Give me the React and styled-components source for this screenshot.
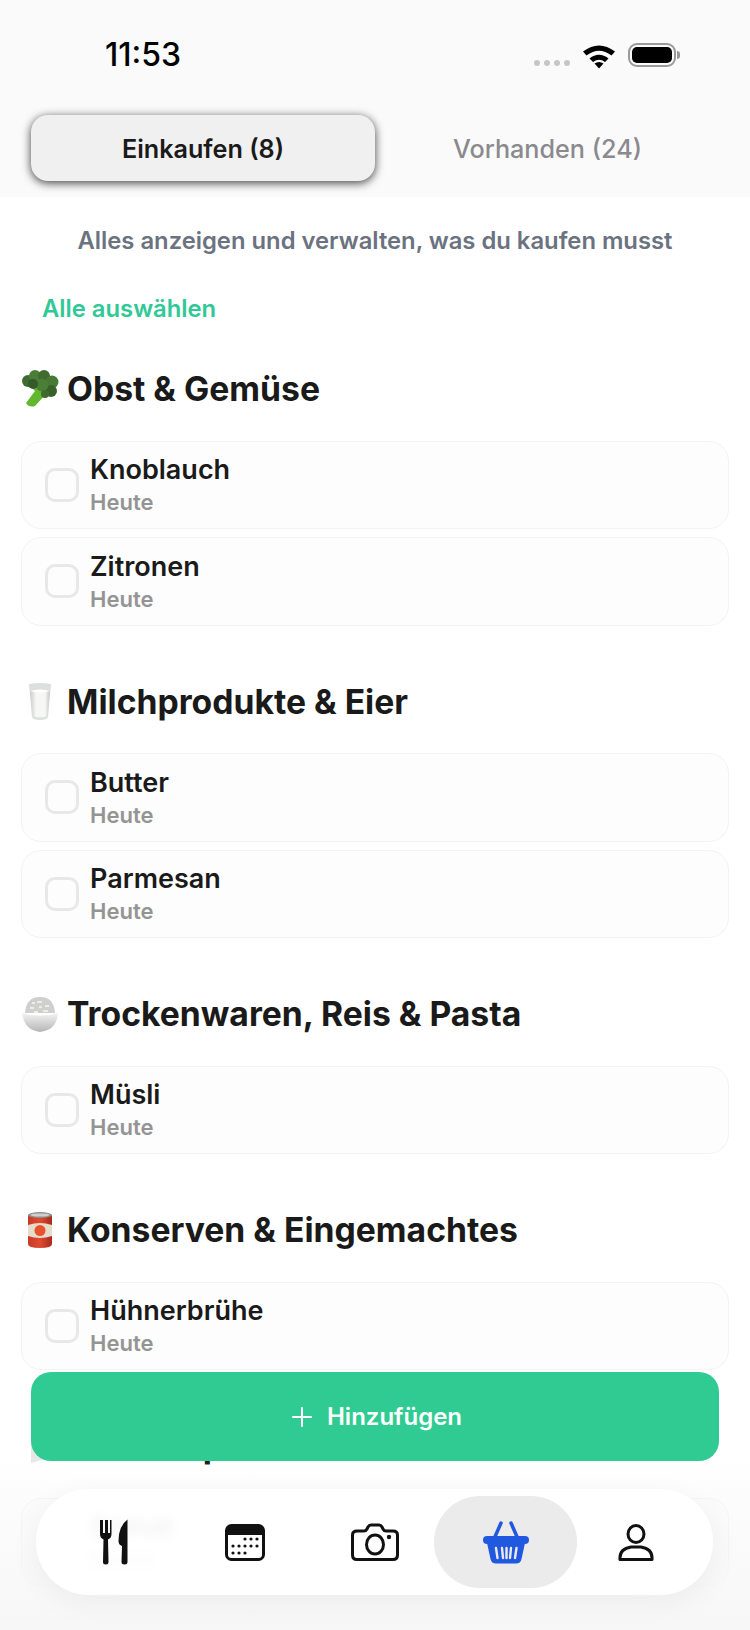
import React from "react";
import styled, { createGlobalStyle } from "styled-components";

const GlobalStyle = createGlobalStyle`
  html, body {
    margin: 0;
    padding: 0;
    background: #fff;
    font-family: Inter, "Liberation Sans", sans-serif;
  }
`;

const sections = [
  { title: "Obst & Gemüse", icon: "broccoli", items: ["Knoblauch", "Zitronen"] },
  { title: "Milchprodukte & Eier", icon: "milk", items: ["Butter", "Parmesan"] },
  { title: "Trockenwaren, Reis & Pasta", icon: "rice", items: ["Müsli"] },
  { title: "Konserven & Eingemachtes", icon: "can", items: ["Hühnerbrühe"] },
  { title: "Tiefkühlprodukte", icon: "ice", items: ["Spinat"] },
];

function Broccoli() {
  return (
    <svg width="38" height="38" viewBox="0 0 38 38">
      <path d="M5 33 L14 21 L11 18 L15 16 L21 21 L26 23 L14 36 Q8 38 5 33 Z" fill="#62b82c" />
      <circle cx="7" cy="11" r="6" fill="#3f6b30" />
      <circle cx="14" cy="6" r="6" fill="#4a7d38" />
      <circle cx="23" cy="6" r="6" fill="#3f6b30" />
      <circle cx="31" cy="12" r="6.500" fill="#477a35" />
      <circle cx="30" cy="21" r="6" fill="#386029" />
      <circle cx="21" cy="15" r="6.500" fill="#4b7f38" />
      <circle cx="12" cy="14" r="5" fill="#34592a" />
      <circle cx="24" cy="24" r="4" fill="#3f6b30" />
    </svg>
  );
}

function Milk() {
  return (
    <svg width="38" height="38" viewBox="0 0 38 38">
      <defs>
        <linearGradient id="milkBody" x1="0" x2="1" y1="0" y2="0">
          <stop offset="0" stopColor="#c9ccca" />
          <stop offset="0.3" stopColor="#f7f7f4" />
          <stop offset="0.75" stopColor="#f7f7f4" />
          <stop offset="1" stopColor="#c4c7c5" />
        </linearGradient>
      </defs>
      <path d="M8 1 Q19 -1 30 1 L27 34 Q26 37 19 37 Q12 37 11 34 Z" fill="#dcdfde" />
      <path d="M9 8 Q19 5 29 8 L26.500 33 Q19 36 11.500 33 Z" fill="url(#milkBody)" />
      <path d="M9 8 Q19 11 29 8 Q19 5 9 8 Z" fill="#ffffff" />
    </svg>
  );
}

function Rice() {
  return (
    <svg width="38" height="38" viewBox="0 0 38 38">
      <defs>
        <linearGradient id="riceBowl" x1="0" x2="0" y1="0" y2="1">
          <stop offset="0" stopColor="#f4f4f4" />
          <stop offset="1" stopColor="#b5b5b5" />
        </linearGradient>
      </defs>
      <path d="M4 18 Q5 2 19 2 Q33 2 34 18 Z" fill="#cfcfcd" />
      <path d="M9 13 h4 M16 7 h5 M24 11 h4 M13 17 h4 M22 16 h5 M18 12 h3 M11 8 h3" stroke="#ececea" strokeWidth="1.800" />
      <path d="M1 18 Q19 23 37 18 Q36 35 19 37 Q3 35 1 18 Z" fill="url(#riceBowl)" />
    </svg>
  );
}

function Can() {
  return (
    <svg width="38" height="38" viewBox="0 0 38 38">
      <defs>
        <linearGradient id="canBody" x1="0" x2="1" y1="0" y2="0">
          <stop offset="0" stopColor="#c73a26" />
          <stop offset="0.5" stopColor="#e04a30" />
          <stop offset="1" stopColor="#a52c1c" />
        </linearGradient>
      </defs>
      <path d="M7 4 H31 V33 Q31 37 19 37 Q7 37 7 33 Z" fill="url(#canBody)" />
      <ellipse cx="19" cy="4" rx="12" ry="3" fill="#8f8f8f" />
      <ellipse cx="19" cy="4" rx="9.500" ry="1.600" fill="#d0d0d0" />
      <path d="M7 14 Q19 10 31 14 V25 Q19 29 7 25 Z" fill="#e6dccb" />
      <circle cx="19" cy="19.500" r="5.500" fill="#e8532d" />
    </svg>
  );
}

function Ice() {
  return (
    <svg width="38" height="38" viewBox="0 0 38 38">
      <path d="M10 4 L32 4 L32 30 L10 36 Z" fill="#e6e8e8" />
    </svg>
  );
}

const emojis = { broccoli: Broccoli, milk: Milk, rice: Rice, can: Can, ice: Ice };

export default function App() {
  return (
    <>
      <GlobalStyle />
      <Page>
        <Header>
          <StatusBar>
            <Clock>11:53</Clock>
            <StatusIcons>
              <Dots>
                <i /><i /><i /><i />
              </Dots>
              <svg width="34" height="26" viewBox="0 0 34 26">
                <path d="M1 8.500 Q17 -3.500 33 8.500 L29.500 12.500 Q17 3 4.500 12.500 Z" fill="#000" />
                <path d="M7.500 15.500 Q17 8 26.500 15.500 L23 19 Q17 14.500 11 19 Z" fill="#000" />
                <path d="M12.500 20.500 Q17 17.500 21.500 20.500 L17 25.500 Z" fill="#000" />
              </svg>
              <Battery><span /></Battery>
            </StatusIcons>
          </StatusBar>
          <Tabs>
            <Tab $active>Einkaufen (8)</Tab>
            <Tab>Vorhanden (24)</Tab>
          </Tabs>
        </Header>
        <Intro>Alles anzeigen und verwalten, was du kaufen musst</Intro>
        <SelectAll>Alle auswählen</SelectAll>
        {sections.map(section => {
          const Emoji = emojis[section.icon];
          return (
            <Section key={section.title}>
              <SectionTitle>
                <Emoji />
                {section.title}
              </SectionTitle>
              <List>
                {section.items.map(item => (
                  <Card key={item}>
                    <Check />
                    <div>
                      <ItemName>{item}</ItemName>
                      <ItemDate>Heute</ItemDate>
                    </div>
                  </Card>
                ))}
              </List>
            </Section>
          );
        })}
        <Footer>
          <AddButton>
            <svg width="20" height="20" viewBox="0 0 20 20">
              <path d="M10 1 V19 M1 10 H19" stroke="#fff" strokeWidth="2" strokeLinecap="round" />
            </svg>
            Hinzufügen
          </AddButton>
          <Nav>
            <NavItem>
              <svg width="32" height="46" viewBox="0 0 32 46">
                <path d="M2 1 V15 Q2 19 5.500 20.500 L5 43 Q5 45.500 7.750 45.500 Q10.500 45.500 10.500 43 L10 20.500 Q13.500 19 13.500 15 V1 H12 V14 H10 V1 H7 V14 H5 V1 Z" fill="#111" />
                <path d="M29.500 0.500 Q20.500 7 20.500 22 Q20.500 26 24 27 L23.500 43 Q23.500 45.500 26.500 45.500 Q29.500 45.500 29.500 43 Z" fill="#111" />
              </svg>
            </NavItem>
            <NavItem>
              <svg width="40" height="37" viewBox="0 0 40 37">
                <rect x="1.500" y="1.500" width="37" height="34" rx="5" fill="#fff" stroke="#111" strokeWidth="3" />
                <path d="M1.500 11 V6.500 Q1.500 1.500 6.500 1.500 H33.500 Q38.500 1.500 38.500 6.500 V11 Z" fill="#111" />
                <g fill="#111">
                  <circle cx="20" cy="15" r="1.600" /><circle cx="26" cy="15" r="1.600" /><circle cx="32" cy="15" r="1.600" />
                  <circle cx="8" cy="22" r="1.600" /><circle cx="14" cy="22" r="1.600" /><circle cx="20" cy="22" r="1.600" /><circle cx="26" cy="22" r="1.600" /><circle cx="32" cy="22" r="1.600" />
                  <circle cx="8" cy="29" r="1.600" /><circle cx="14" cy="29" r="1.600" /><circle cx="20" cy="29" r="1.600" />
                </g>
              </svg>
            </NavItem>
            <NavItem>
              <svg width="48" height="38" viewBox="0 0 48 38">
                <path d="M6 8 H13 Q15 8 16 6 L17 4 Q18 2 20 2 H28 Q30 2 31 4 L32 6 Q33 8 35 8 H42 Q46.500 8 46.500 12 V32 Q46.500 36.500 42 36.500 H6 Q1.500 36.500 1.500 32 V12 Q1.500 8 6 8 Z" fill="none" stroke="#111" strokeWidth="3" />
                <ellipse cx="24" cy="21.500" rx="8.500" ry="9.500" fill="none" stroke="#111" strokeWidth="3" />
                <circle cx="38" cy="14" r="2.200" fill="#111" />
              </svg>
            </NavItem>
            <NavItem $active>
              <svg width="46" height="43" viewBox="0 0 46 43">
                <path d="M11 18 L18 2 M35 18 L28 2" stroke="#2158e0" strokeWidth="3.500" strokeLinecap="round" />
                <rect x="0" y="15" width="46" height="8" rx="4" fill="#2158e0" />
                <path d="M4 22 H42 L38.500 38 Q37.500 42.500 33 42.500 H13 Q8.500 42.500 7.500 38 Z" fill="#2158e0" />
                <path d="M13 27 L14.500 37 M19 27 L20 37 M23.500 27 V37 M28 27 L27 37 M33.500 27 L32 37" stroke="#ebebeb" strokeWidth="2.400" strokeLinecap="round" />
              </svg>
            </NavItem>
            <NavItem>
              <svg width="36" height="37" viewBox="0 0 36 37">
                <ellipse cx="18" cy="10" rx="8" ry="8.500" fill="none" stroke="#111" strokeWidth="3" />
                <path d="M2 35.500 Q1 25 13 23 H23 Q35 25 34 35.500 Z" fill="none" stroke="#111" strokeWidth="3" strokeLinejoin="round" />
              </svg>
            </NavItem>
          </Nav>
        </Footer>
      </Page>
    </>
  );
}

const Page = styled.div`
  position: relative;
  width: 750px;
  height: 1630px;
  overflow: hidden;
  background: #fff;
  color: #1a1a1a;
`;

const Header = styled.header`
  background: #fafafa;
  height: 197px;
  box-sizing: border-box;
`;

const StatusBar = styled.div`
  height: 115px;
  display: flex;
  justify-content: space-between;
  padding: 36px 74px 0 105px;
  box-sizing: border-box;
`;

const Clock = styled.div`
  font-size: 32px;
  font-weight: 500;
  line-height: 38px;
  color: #000;
`;

const StatusIcons = styled.div`
  display: flex;
  align-items: flex-start;
  height: 38px;
  padding-top: 7px;
  gap: 12px;
`;

const Dots = styled.div`
  display: flex;
  gap: 4px;
  padding-top: 17px;
  i {
    width: 6px;
    height: 6px;
    border-radius: 50%;
    background: #c6c6c6;
  }
`;

const Battery = styled.div`
  position: relative;
  width: 48px;
  height: 24px;
  box-sizing: border-box;
  border: 2px solid #9a9a9a;
  border-radius: 9px;
  padding: 2px;
  span {
    display: block;
    height: 100%;
    background: #000;
    border-radius: 5px;
  }
  &::after {
    content: "";
    position: absolute;
    right: -6px;
    top: 6px;
    width: 3px;
    height: 8px;
    border-radius: 0 3px 3px 0;
    background: #9a9a9a;
  }
`;

const Tabs = styled.div`
  display: grid;
  grid-template-columns: 344px 345px;
  padding: 0 30px 0 31px;
  height: 66px;
`;

const Tab = styled.div`
  display: flex;
  align-items: center;
  justify-content: center;
  padding-top: 2px;
  box-sizing: border-box;
  border-radius: 17px;
  font-size: 25.2px;
  font-weight: ${props => (props.$active ? 600 : 500)};
  color: ${props => (props.$active ? "#1a1a1a" : "#8a8a8e")};
  background: ${props => (props.$active ? "#f0f0f0" : "transparent")};
  box-shadow: ${props => (props.$active ? "0 2px 10px rgba(0, 0, 0, 0.75)" : "none")};
`;

const Intro = styled.p`
  margin: 29px 0 0;
  text-align: center;
  font-size: 23.8px;
  line-height: 30px;
  font-weight: 600;
  color: #6b7280;
`;

const SelectAll = styled.div`
  margin: 38px 0 0 42px;
  font-size: 23.8px;
  line-height: 30px;
  font-weight: 600;
  color: #30c996;
`;

const Section = styled.section`
  padding: 0 21px;
  margin-top: 45px;
  margin-bottom: 56px;
  & + & {
    margin-top: 0;
  }
`;

const SectionTitle = styled.h2`
  display: flex;
  align-items: center;
  gap: 8px;
  margin: 0 0 31.5px;
  font-size: 33.7px;
  line-height: 40px;
  font-weight: 700;
  color: #1a1a1a;
`;

const List = styled.div`
  display: flex;
  flex-direction: column;
  gap: 8px;
`;

const Card = styled.div`
  display: flex;
  align-items: center;
  gap: 11px;
  height: 88.5px;
  box-sizing: border-box;
  padding-left: 23px;
  background: #fdfdfd;
  border: 1px solid #f3f3f3;
  border-radius: 20px;
`;

const Check = styled.span`
  width: 34px;
  height: 34px;
  box-sizing: border-box;
  border: 3px solid #e8e8e8;
  border-radius: 10px;
`;

const ItemName = styled.div`
  font-size: 27px;
  line-height: 34px;
  font-weight: 600;
  color: #1a1a1a;
`;

const ItemDate = styled.div`
  margin-top: 1px;
  font-size: 22px;
  line-height: 28px;
  font-weight: 600;
  color: #949494;
`;

const Footer = styled.div`
  position: absolute;
  left: 0;
  right: 0;
  bottom: 0;
  height: 258px;
  box-sizing: border-box;
  display: flex;
  flex-direction: column;
  background: linear-gradient(to bottom, rgba(247, 247, 247, 0) 89px, rgba(247, 247, 247, 0.3) 120px, #f7f7f7 100%);
`;

const AddButton = styled.button`
  display: flex;
  align-items: center;
  justify-content: center;
  gap: 15px;
  width: 688px;
  height: 89px;
  margin: 0 0 0 31px;
  padding: 0 0 0 4px;
  border: none;
  border-radius: 20px;
  background: #30cb92;
  color: #fff;
  font-family: inherit;
  font-size: 24px;
  font-weight: 600;
`;

const Nav = styled.nav`
  display: flex;
  align-items: center;
  box-sizing: border-box;
  width: 677px;
  height: 106px;
  margin: 28px 0 0 36px;
  padding: 0 13px;
  border-radius: 53px;
  background: rgba(255, 255, 255, 0.9);
  backdrop-filter: blur(4px);
  box-shadow: 0 8px 30px rgba(0, 0, 0, 0.05);
`;

const NavItem = styled.div`
  flex: none;
  display: flex;
  align-items: center;
  justify-content: center;
  height: 92px;
  width: ${props => (props.$active ? "143px" : "130.5px")};
  margin: ${props => (props.$active ? "0 -6.25px" : "0")};
  border-radius: 46px;
  background: ${props => (props.$active ? "#ebebeb" : "transparent")};
`;
